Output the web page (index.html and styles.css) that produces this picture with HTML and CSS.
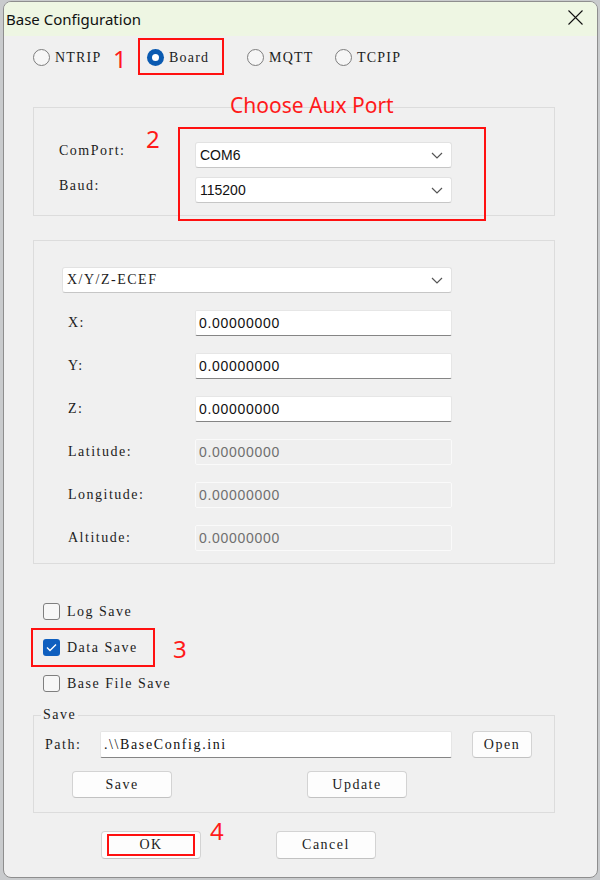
FILE: index.html
```html
<!DOCTYPE html>
<html lang="en">
<head>
<meta charset="utf-8">
<title>Base Configuration</title>
<link rel="stylesheet" href="styles.css">
</head>
<body>
<div class="window">
  <div class="titlebar">
    <span class="title">Base Configuration</span>
    <span class="close">
      <svg width="15" height="15" viewBox="0 0 15 15"><path d="M0.5 0.5 L14.5 14.5 M14.5 0.5 L0.5 14.5" stroke="#111" stroke-width="1.1" fill="none"/></svg>
    </span>
  </div>

  <div class="content">
    <div class="radio-row">
      <label class="radio r-ntrip"><span class="dot"></span><span class="lbl">NTRIP</span></label>
      <span class="num num1">1</span>
      <span class="redbox-board">
        <label class="radio"><span class="dot on"></span><span class="lbl">Board</span></label>
      </span>
      <label class="radio r-mqtt"><span class="dot"></span><span class="lbl">MQTT</span></label>
      <label class="radio"><span class="dot"></span><span class="lbl">TCPIP</span></label>
    </div>

    <div class="group g-port">
      <span class="anno-title">Choose Aux Port</span>
      <span class="num num2">2</span>
      <span class="redbox redbox2"></span>
      <div class="port-row">
        <span class="lbl">ComPort:</span>
        <div class="combo sans"><span>COM6</span><svg class="chev" width="12" height="7" viewBox="0 0 12 7"><path d="M1 1 L6 6 L11 1" stroke="#555" stroke-width="1.2" fill="none"/></svg></div>
      </div>
      <div class="port-row">
        <span class="lbl">Baud:</span>
        <div class="combo sans"><span>115200</span><svg class="chev" width="12" height="7" viewBox="0 0 12 7"><path d="M1 1 L6 6 L11 1" stroke="#555" stroke-width="1.2" fill="none"/></svg></div>
      </div>
    </div>

    <div class="group g-coord">
      <div class="combo wide"><span class="lbl">X/Y/Z-ECEF</span><svg class="chev" width="12" height="7" viewBox="0 0 12 7"><path d="M1 1 L6 6 L11 1" stroke="#555" stroke-width="1.2" fill="none"/></svg></div>
      <div class="coord-rows">
        <div class="coord-row"><span class="lbl">X:</span><div class="field">0.00000000</div></div>
        <div class="coord-row"><span class="lbl">Y:</span><div class="field">0.00000000</div></div>
        <div class="coord-row"><span class="lbl">Z:</span><div class="field">0.00000000</div></div>
        <div class="coord-row"><span class="lbl">Latitude:</span><div class="field disabled">0.00000000</div></div>
        <div class="coord-row"><span class="lbl">Longitude:</span><div class="field disabled">0.00000000</div></div>
        <div class="coord-row"><span class="lbl">Altitude:</span><div class="field disabled">0.00000000</div></div>
      </div>
    </div>

    <div class="checks">
      <span class="redbox redbox3"></span>
      <span class="num num3">3</span>
      <label class="check"><span class="box"></span><span class="lbl">Log Save</span></label>
      <label class="check"><span class="box on"><svg width="11" height="9" viewBox="0 0 11 9"><path d="M1 4.5 L4 7.5 L10 1.5" stroke="#fff" stroke-width="1.4" fill="none"/></svg></span><span class="lbl">Data Save</span></label>
      <label class="check"><span class="box"></span><span class="lbl">Base File Save</span></label>
    </div>

    <fieldset class="savebox">
      <legend class="lbl">Save</legend>
      <div class="save-inner">
        <div class="path-row">
          <span class="lbl path-lbl">Path:</span>
          <div class="field path lbl">.\\BaseConfig.ini</div>
          <button class="btn btn-open">Open</button>
        </div>
        <div class="btn-row">
          <button class="btn btn-save">Save</button>
          <button class="btn btn-update">Update</button>
        </div>
      </div>
    </fieldset>

    <div class="dialog-btns">
      <button class="btn btn-ok">OK<span class="redbox redbox4"></span></button>
      <span class="num num4">4</span>
      <button class="btn btn-cancel">Cancel</button>
    </div>
  </div>
</div>
</body>
</html>
```

FILE: styles.css
```css
* { box-sizing: border-box; }

html, body {
  margin: 0;
  padding: 0;
}

body {
  width: 600px;
  height: 880px;
  background: #c9cbcd;
  overflow: hidden;
}

.window {
  margin: 1px 0 0 3px;
  width: 595px;
  height: 877px;
  border: 1px solid #8e8e8e;
  border-radius: 8px;
  background: #f0f0f0;
  overflow: hidden;
}

.titlebar {
  height: 34px;
  background: #eef6e3;
  display: flex;
  align-items: center;
  justify-content: space-between;
  padding-left: 2px;
}

.title {
  font-family: "Noto Sans", "Open Sans", sans-serif;
  font-size: 15px;
  color: #111;
}

.close {
  width: 44px;
  height: 34px;
  display: flex;
  align-items: center;
  justify-content: center;
  margin-top: -3px;
}

.content {
  padding-left: 29px;
}

.lbl {
  font-family: "Liberation Serif", "Times New Roman", serif;
  font-size: 14px;
  letter-spacing: 1.5px;
  color: #1c1c1c;
}

.sans {
  font-family: "Liberation Sans", Arial, sans-serif;
  font-size: 14px;
  color: #111;
}

/* radio row */
.radio-row {
  margin-top: 2px;
  height: 37px;
  display: flex;
  align-items: center;
}

.radio {
  display: flex;
  align-items: center;
  gap: 5px;
}

.radio .lbl {
  padding-top: 3px;
  letter-spacing: 1.2px;
}

.r-ntrip { width: 80px; }
.r-mqtt { width: 88px; }

.dot {
  width: 17px;
  height: 17px;
  border-radius: 50%;
  border: 1px solid #7d7d7d;
  background: #f6f6f6;
  flex: none;
  margin-top: 2px;
}

.dot.on {
  border: none;
  background: #0a5ab1;
  display: flex;
  align-items: center;
  justify-content: center;
}

.dot.on::after {
  content: "";
  width: 7px;
  height: 7px;
  border-radius: 50%;
  background: #fff;
}

.num {
  font-family: "Noto Sans", "Liberation Sans", sans-serif;
  font-size: 24px;
  color: #ff1a1a;
  line-height: 1;
}

.num1 {
  width: 10px;
  margin-top: 4px;
}

.redbox-board {
  margin-left: 15px;
  margin-right: 23px;
  width: 86px;
  height: 37px;
  border: 2px solid #ff1010;
  display: flex;
  align-items: center;
  padding-left: 7px;
}

/* groups */
.group {
  position: relative;
  width: 522px;
  border: 1px solid #dcdcdc;
}

.g-port {
  margin-top: 32px;
  height: 109px;
  padding: 34px 0 0 25px;
}

.anno-title {
  position: absolute;
  left: 196px;
  top: -17px;
  font-family: "Noto Sans", "Liberation Sans", sans-serif;
  font-size: 21px;
  color: #ff1a1a;
  line-height: 28px;
  white-space: nowrap;
}

.num2 {
  position: absolute;
  left: 112px;
  top: 19px;
}

.redbox {
  position: absolute;
  border: 2px solid #ff1010;
  pointer-events: none;
}

.redbox2 {
  left: 144px;
  top: 19px;
  width: 308px;
  height: 94px;
}

.port-row {
  display: grid;
  grid-template-columns: 136px 257px;
  align-items: start;
}

.port-row + .port-row {
  margin-top: 9px;
}

.port-row .lbl {
  line-height: 18px;
}

.combo {
  height: 26px;
  background: #fff;
  border: 1px solid #e2e2e2;
  border-bottom-color: #c6c6c6;
  border-radius: 3px;
  display: flex;
  align-items: center;
  justify-content: space-between;
  padding: 0 8px 0 4px;
}

.combo.wide {
  width: 390px;
}

.chev { flex: none; }

.g-coord {
  margin-top: 24px;
  height: 324px;
  padding: 26px 0 0 28px;
}

.coord-rows {
  margin-top: 17px;
  display: flex;
  flex-direction: column;
  gap: 17px;
}

.coord-row {
  display: grid;
  grid-template-columns: 127px 257px;
  align-items: center;
  padding-left: 6px;
}

.field {
  height: 26px;
  background: #fff;
  border: 1px solid #e6e6e6;
  border-bottom: 1px solid #858585;
  border-radius: 2px;
  display: flex;
  align-items: center;
  padding-left: 3px;
  font-family: "Liberation Sans", Arial, sans-serif;
  font-size: 14px;
  letter-spacing: 0.7px;
  color: #111;
}

.field.disabled {
  background: #efefef;
  border: 1px solid #fafafa;
  color: #707070;
}

/* checkboxes */
.checks {
  position: relative;
  margin-top: 39px;
  padding-left: 10px;
  display: flex;
  flex-direction: column;
  gap: 19px;
}

.check {
  display: flex;
  align-items: center;
  gap: 7px;
  height: 17px;
}

.box {
  width: 17px;
  height: 17px;
  border: 1px solid #7f7f7f;
  border-radius: 3px;
  background: #f7f7f7;
  flex: none;
}

.box.on {
  border: none;
  background: #0f5fbf;
  display: flex;
  align-items: center;
  justify-content: center;
}

.redbox3 {
  left: -2px;
  top: 25px;
  width: 124px;
  height: 39px;
}

.num3 {
  position: absolute;
  left: 140px;
  top: 34px;
}

/* save group */
.savebox {
  margin: 15px 0 0 0;
  width: 522px;
  padding: 0;
  border: 1px solid #dcdcdc;
  min-inline-size: 0;
}

.savebox legend {
  margin-left: 7px;
  padding: 0 2px;
  line-height: 16px;
}

.save-inner {
  padding: 8px 0 14px 11px;
}

.path-row {
  display: flex;
  align-items: center;
}

.path-lbl {
  width: 55px;
}

.field.path {
  width: 352px;
  height: 27px;
  font-family: "Liberation Serif", "Times New Roman", serif;
  letter-spacing: 1.6px;
}

.btn {
  position: relative;
  height: 27px;
  background: #fdfdfd;
  border: 1px solid #d3d3d3;
  border-bottom-color: #c2c2c2;
  border-radius: 4px;
  font-family: "Liberation Serif", "Times New Roman", serif;
  font-size: 14px;
  letter-spacing: 1.5px;
  color: #1c1c1c;
  padding: 0;
}

.btn-open {
  width: 60px;
  margin-left: 20px;
}

.btn-row {
  margin-top: 13px;
  display: flex;
}

.btn-save {
  width: 100px;
  margin-left: 27px;
}

.btn-update {
  width: 100px;
  margin-left: 135px;
}

.dialog-btns {
  position: relative;
  margin-top: 18px;
  display: flex;
  padding-left: 68px;
}

.btn-ok,
.btn-cancel {
  width: 100px;
  height: 28px;
}

.btn-cancel {
  margin-left: 75px;
}

.redbox4 {
  left: 5px;
  top: 2px;
  width: 88px;
  height: 22px;
}

.num4 {
  position: absolute;
  left: 177px;
  top: -12px;
}
```
